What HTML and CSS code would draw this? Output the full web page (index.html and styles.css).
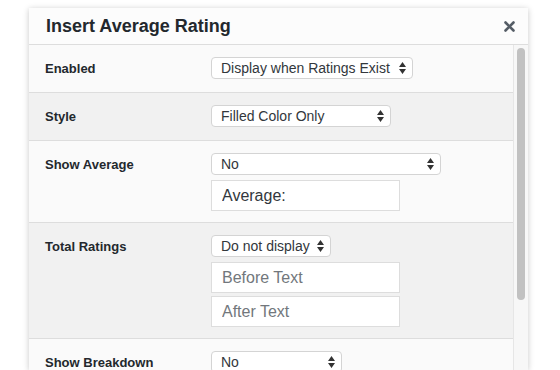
FILE: index.html
```html
<!DOCTYPE html>
<html lang="en">
<head>
  <meta charset="UTF-8">
  <meta name="viewport" content="width=device-width, initial-scale=1.0">
  <title>Insert Average Rating</title>
  <link rel="stylesheet" href="styles.css">
</head>
<body>
  <div class="modal">
    <div class="modal-header">
      <h1>Insert Average Rating</h1>
      <button class="close" aria-label="Close">
        <svg width="11" height="11" viewBox="0 0 11 11"><path d="M1.5 1.5 L9.5 9.5 M9.5 1.5 L1.5 9.5" stroke="#555d66" stroke-width="2.6" stroke-linecap="round"/></svg>
      </button>
    </div>

    <div class="modal-body">
      <div class="rows">
        <div class="row">
          <label>Enabled</label>
          <div class="field">
            <div class="select" style="width: 202px"><span>Display when Ratings Exist</span><svg class="arrows" width="7" height="12" viewBox="0 0 7 12"><path d="M3.5 0 L7 5 L0 5 Z M3.5 12 L7 7 L0 7 Z" fill="#333"/></svg></div>
          </div>
        </div>

        <div class="row alt">
          <label>Style</label>
          <div class="field">
            <div class="select" style="width: 180px"><span>Filled Color Only</span><svg class="arrows" width="7" height="12" viewBox="0 0 7 12"><path d="M3.5 0 L7 5 L0 5 Z M3.5 12 L7 7 L0 7 Z" fill="#333"/></svg></div>
          </div>
        </div>

        <div class="row">
          <label>Show Average</label>
          <div class="field">
            <div class="select" style="width: 230px"><span>No</span><svg class="arrows" width="7" height="12" viewBox="0 0 7 12"><path d="M3.5 0 L7 5 L0 5 Z M3.5 12 L7 7 L0 7 Z" fill="#333"/></svg></div>
            <input type="text" value="Average:">
          </div>
        </div>

        <div class="row alt">
          <label>Total Ratings</label>
          <div class="field">
            <div class="select" style="width: 120px"><span>Do not display</span><svg class="arrows" width="7" height="12" viewBox="0 0 7 12"><path d="M3.5 0 L7 5 L0 5 Z M3.5 12 L7 7 L0 7 Z" fill="#333"/></svg></div>
            <input type="text" placeholder="Before Text">
            <input type="text" placeholder="After Text">
          </div>
        </div>

        <div class="row">
          <label>Show Breakdown</label>
          <div class="field">
            <div class="select" style="width: 131px"><span>No</span><svg class="arrows" width="7" height="12" viewBox="0 0 7 12"><path d="M3.5 0 L7 5 L0 5 Z M3.5 12 L7 7 L0 7 Z" fill="#333"/></svg></div>
            <input type="text" placeholder="Label">
          </div>
        </div>
      </div>

      <div class="scrollbar">
        <div class="thumb"></div>
      </div>
    </div>
  </div>
</body>
</html>
```

FILE: styles.css
```css
html, body {
  margin: 0;
  padding: 0;
  height: 370px;
  overflow: hidden;
  background-color: #fff;
  font-family: "Liberation Sans", Arial, sans-serif;
  color: #23282d;
}
.modal {
  margin: 8px 0 0 29px;
  width: 499px;
  height: 362px;
  overflow: hidden;
  background-color: #fcfcfc;
  box-shadow: 0 1px 6px rgba(0, 0, 0, 0.22);
}
.modal-header {
  display: flex;
  align-items: center;
  justify-content: space-between;
  height: 36px;
  padding: 0 13px 0 17px;
  border-bottom: 1px solid #dddddd;
  background-color: #fcfcfc;
}
.modal-header h1 {
  margin: 0;
  font-size: 18px;
  font-weight: bold;
  color: #23282d;
}
.close {
  display: flex;
  background: none;
  border: none;
  padding: 0;
  margin-top: 1px;
}
.modal-body {
  display: flex;
  height: 325px;
}
.rows {
  width: 484px;
}
.row {
  display: flex;
  align-items: flex-start;
  padding: 12px 16px 11px;
  border-bottom: 1px solid #dddddd;
  background-color: #fafafa;
}
.row.alt {
  background-color: #f1f1f1;
}
.row label {
  width: 166px;
  flex-shrink: 0;
  font-size: 13px;
  font-weight: bold;
  line-height: 23px;
  color: #23282d;
}
.field {
  display: flex;
  flex-direction: column;
  gap: 3px;
}
.select {
  box-sizing: border-box;
  display: flex;
  align-items: center;
  justify-content: space-between;
  height: 22px;
  margin-bottom: 2px;
  padding: 0 6px 0 9px;
  background-color: #fff;
  border: 1px solid #d4d4d4;
  border-radius: 4px;
  font-size: 14px;
  color: #32373c;
  white-space: nowrap;
}
.arrows {
  flex-shrink: 0;
}
input {
  box-sizing: border-box;
  width: 189px;
  height: 31px;
  margin: 0;
  padding: 0 10px;
  border: 1px solid #dddddd;
  border-radius: 0;
  background-color: #fff;
  font-family: "Liberation Sans", Arial, sans-serif;
  font-size: 16px;
  color: #32373c;
  outline: none;
}
input::placeholder {
  color: #72777c;
}
.scrollbar {
  width: 14px;
  border-left: 1px solid #e6e6e6;
  background-color: #f7f7f7;
  display: flex;
  justify-content: center;
  padding-top: 3px;
}
.thumb {
  width: 8px;
  height: 252px;
  background-color: #c1c1c1;
  border-radius: 4px;
}
```
